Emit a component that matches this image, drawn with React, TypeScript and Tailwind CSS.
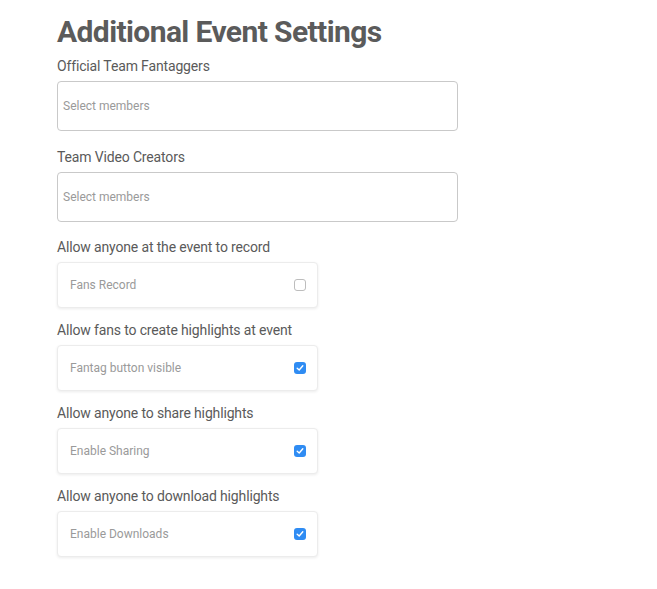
import React from 'react';

const font = { fontFamily: 'Roboto, "Liberation Sans", sans-serif' };

function MemberSelect({ label }: { label: string }) {
  return (
    <div className="flex flex-col">
      <label className="text-[14px] leading-[20px] tracking-[-0.15px] text-[#5a5a5a] mb-[5px]">{label}</label>
      <div className="w-[401px] h-[50px] rounded-[4px] border border-[#c9c9c9] bg-white flex items-center px-[5px]">
        <span className="text-[12px] text-[#9a9a9a]">Select members</span>
      </div>
    </div>
  );
}

function ToggleCard({ label, text, checked }: { label: string; text: string; checked: boolean }) {
  return (
    <div className="flex flex-col">
      <label className="text-[14px] leading-[20px] tracking-[-0.15px] text-[#5a5a5a] mb-[5px]">{label}</label>
      <div className="w-[261px] h-[46px] rounded-[4px] border border-[#ececec] bg-white shadow-[0_1px_3px_rgba(0,0,0,0.08)] flex items-center justify-between pl-[12px] pr-[11px]">
        <span className="text-[12px] text-[#9a9a9a]">{text}</span>
        {checked ? (
          <span className="w-[12px] h-[12px] rounded-[3px] bg-[#2f8cf3] flex items-center justify-center">
            <svg width="8" height="8" viewBox="0 0 8 8" fill="none">
              <path d="M1.2 4.2 L3.2 6 L6.8 1.8" stroke="white" strokeWidth="1.4" strokeLinecap="round" strokeLinejoin="round" />
            </svg>
          </span>
        ) : (
          <span className="w-[12px] h-[12px] rounded-[3px] border border-[#bdbdbd] bg-white" />
        )}
      </div>
    </div>
  );
}

export default function App() {
  return (
    <div className="min-h-screen bg-white pl-[57px] pt-[14px]" style={font}>
      <h1 className="text-[30px] leading-[36px] font-bold tracking-[-0.6px] text-[#5b5b5b] mb-[6px]">Additional Event Settings</h1>

      <div className="flex flex-col gap-[16px]">
        <MemberSelect label="Official Team Fantaggers" />
        <MemberSelect label="Team Video Creators" />
      </div>

      <div className="flex flex-col gap-[12px] mt-[15px]">
        <ToggleCard label="Allow anyone at the event to record" text="Fans Record" checked={false} />
        <ToggleCard label="Allow fans to create highlights at event" text="Fantag button visible" checked />
        <ToggleCard label="Allow anyone to share highlights" text="Enable Sharing" checked />
        <ToggleCard label="Allow anyone to download highlights" text="Enable Downloads" checked />
      </div>
    </div>
  );
}
